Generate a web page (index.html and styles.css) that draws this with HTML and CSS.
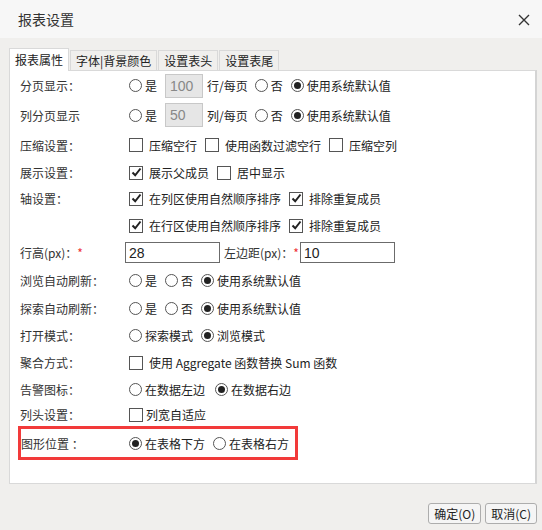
FILE: index.html
```html
<!DOCTYPE html>
<html lang="zh-CN">
<head>
	<meta charset="UTF-8">
	<title>报表设置</title>
	<link rel="stylesheet" href="styles.css">
</head>
<body>
	<div class="dialog">
		<div class="titlebar">
			<span class="title">报表设置</span>
			<span class="close">
				<svg width="12" height="12" viewBox="0 0 12 12"><path d="M1 1 L11 11 M11 1 L1 11" stroke="#333" stroke-width="1.4" fill="none"/></svg>
			</span>
		</div>
		<div class="body">
			<ul class="tabs">
				<li class="act">报表属性</li>
				<li>字体|背景颜色</li>
				<li>设置表头</li>
				<li>设置表尾</li>
			</ul>
			<div class="panel">
				<div class="row r1">
					<span class="label">分页显示：</span>
					<span class="opt"><i class="radio"></i>是</span>
					<span class="box off">100</span>
					<span class="unit">行/每页</span>
					<span class="opt"><i class="radio"></i>否</span>
					<span class="opt"><i class="radio on"></i>使用系统默认值</span>
				</div>
				<div class="row r2">
					<span class="label">列分页显示</span>
					<span class="opt"><i class="radio"></i>是</span>
					<span class="box off">50</span>
					<span class="unit">列/每页</span>
					<span class="opt"><i class="radio"></i>否</span>
					<span class="opt"><i class="radio on"></i>使用系统默认值</span>
				</div>
				<div class="row r3">
					<span class="label">压缩设置：</span>
					<span class="cb"><i class="check"></i>压缩空行</span>
					<span class="cb"><i class="check"></i>使用函数过滤空行</span>
					<span class="cb"><i class="check"></i>压缩空列</span>
				</div>
				<div class="row r4">
					<span class="label">展示设置：</span>
					<span class="cb"><i class="check on"><svg width="11" height="11" viewBox="0 0 11 11"><path d="M1.5 5.5 L4.2 8.3 L9.5 1.5" stroke="#222" stroke-width="2" fill="none"/></svg></i>展示父成员</span>
					<span class="cb"><i class="check"></i>居中显示</span>
				</div>
				<div class="row">
					<span class="label">轴设置：</span>
					<span class="cb"><i class="check on"><svg width="11" height="11" viewBox="0 0 11 11"><path d="M1.5 5.5 L4.2 8.3 L9.5 1.5" stroke="#222" stroke-width="2" fill="none"/></svg></i>在列区使用自然顺序排序</span>
					<span class="cb"><i class="check on"><svg width="11" height="11" viewBox="0 0 11 11"><path d="M1.5 5.5 L4.2 8.3 L9.5 1.5" stroke="#222" stroke-width="2" fill="none"/></svg></i>排除重复成员</span>
				</div>
				<div class="row">
					<span class="label"></span>
					<span class="cb"><i class="check on"><svg width="11" height="11" viewBox="0 0 11 11"><path d="M1.5 5.5 L4.2 8.3 L9.5 1.5" stroke="#222" stroke-width="2" fill="none"/></svg></i>在行区使用自然顺序排序</span>
					<span class="cb"><i class="check on"><svg width="11" height="11" viewBox="0 0 11 11"><path d="M1.5 5.5 L4.2 8.3 L9.5 1.5" stroke="#222" stroke-width="2" fill="none"/></svg></i>排除重复成员</span>
				</div>
				<div class="row">
					<span class="label short">行高(px)：<em>*</em></span>
					<span class="box edit">28</span>
					<span class="label inline">左边距(px)：<em>*</em></span>
					<span class="box edit">10</span>
				</div>
				<div class="row r8">
					<span class="label">浏览自动刷新：</span>
					<span class="opt"><i class="radio"></i>是</span>
					<span class="opt"><i class="radio"></i>否</span>
					<span class="opt"><i class="radio on"></i>使用系统默认值</span>
				</div>
				<div class="row">
					<span class="label">探索自动刷新：</span>
					<span class="opt"><i class="radio"></i>是</span>
					<span class="opt"><i class="radio"></i>否</span>
					<span class="opt"><i class="radio on"></i>使用系统默认值</span>
				</div>
				<div class="row">
					<span class="label">打开模式：</span>
					<span class="opt"><i class="radio"></i>探索模式</span>
					<span class="opt"><i class="radio on"></i>浏览模式</span>
				</div>
				<div class="row">
					<span class="label">聚合方式：</span>
					<span class="cb"><i class="check"></i>使用 Aggregate 函数替换 Sum 函数</span>
				</div>
				<div class="row">
					<span class="label">告警图标：</span>
					<span class="opt wide"><i class="radio"></i>在数据左边</span>
					<span class="opt"><i class="radio on"></i>在数据右边</span>
				</div>
				<div class="row r13">
					<span class="label">列头设置：</span>
					<span class="cb tight"><i class="check"></i>列宽自适应</span>
				</div>
				<div class="row r14">
					<span class="label">图形位置 ：</span>
					<span class="opt"><i class="radio on"></i>在表格下方</span>
					<span class="opt"><i class="radio"></i>在表格右方</span>
				</div>
			</div>
			<div class="footer">
				<button class="btn">确定(O)</button>
				<button class="btn">取消(C)</button>
			</div>
		</div>
	</div>
</body>
</html>
```

FILE: styles.css
```css
* {
	box-sizing: border-box;
}
body {
	margin: 0;
	background: #f0efed;
	font-family: "Noto Sans CJK SC", "Liberation Sans", sans-serif;
	font-size: 12px;
	color: #222;
}
ul {
	margin: 0;
	padding: 0;
	list-style: none;
}
.dialog {
	width: 542px;
	height: 530px;
}
.titlebar {
	height: 38px;
	background: #f7f7f7;
	display: flex;
	align-items: center;
	justify-content: space-between;
	padding: 0 12px 0 18px;
}
.title {
	font-size: 14px;
	color: #333;
}
.close {
	width: 12px;
	height: 12px;
	display: flex;
	margin-top: 1px;
}
.body {
	padding: 10px 5px 0 9px;
}
.tabs {
	display: flex;
	align-items: flex-end;
	gap: 1px;
	height: 22px;
}
.tabs li {
	height: 20px;
	padding: 0 5px;
	border: 1px solid #d9d9d9;
	border-bottom: none;
	background: #f0efed;
	display: flex;
	align-items: center;
	color: #222;
}
.tabs .act {
	height: 23px;
	margin-bottom: -1px;
	background: #fff;
	position: relative;
	padding-bottom: 1px;
}
.panel {
	height: 414px;
	background: #fff;
	border: 1px solid #d9d9d9;
	border-right: 2px solid #d4d4d4;
	padding: 0 0 0 10px;
}
.row {
	display: flex;
	align-items: center;
	height: 27px;
	white-space: nowrap;
}
.row > * {
	flex: none;
}
.r1 {
	height: 29px;
}
.r2,
.r3 {
	height: 30px;
}
.r4 {
	height: 25px;
}
.r8 {
	height: 29px;
}
.r13 {
	height: 23px;
}
.r14 {
	height: 34px;
	width: 280px;
	margin-left: -2px;
	border: 3px solid #f23a3a;
}
.label {
	width: 109px;
	color: #333;
}
.r14 .label {
	width: 108px;
}
.label.short {
	width: 105px;
}
.label.inline {
	width: auto;
	margin: 0 1px 0 4px;
}
.label em {
	font-style: normal;
	color: #e33;
}
.opt {
	display: flex;
	align-items: center;
	gap: 3px;
	margin-right: 8px;
}
.opt.wide {
	margin-right: 10px;
}
.r1 .opt:first-of-type,
.r2 .opt:first-of-type {
	margin-right: 4px;
}
.radio {
	width: 13px;
	height: 13px;
	border: 1px solid #555;
	border-radius: 50%;
	background: #fff;
	display: flex;
	align-items: center;
	justify-content: center;
}
.radio.on::after {
	content: '';
	width: 7px;
	height: 7px;
	border-radius: 50%;
	background: #222;
}
.cb {
	display: flex;
	align-items: center;
	gap: 6px;
	margin-right: 8px;
}
.cb.tight {
	gap: 3px;
}
.check {
	width: 14px;
	height: 14px;
	border: 1px solid #555;
	background: #fff;
	display: flex;
	align-items: center;
	justify-content: center;
}
.box {
	height: 24px;
	width: 38px;
	display: flex;
	align-items: center;
	padding-left: 4px;
	font-size: 14px;
	font-family: "Liberation Sans", sans-serif;
}
.box.off {
	background: #e6e6e6;
	border: 1px solid #c8c8c8;
	color: #888;
}
.box.edit {
	width: 95px;
	height: 21px;
	border: 1px solid #6b6b6b;
	color: #222;
	padding-left: 3px;
}
.unit {
	margin: 0 7px 0 4px;
}
.footer {
	display: flex;
	justify-content: flex-end;
	gap: 4px;
	margin-top: 19px;
}
.btn {
	height: 21px;
	padding: 0 5px;
	border: 1px solid #adadad;
	border-radius: 3px;
	background: #f5f5f5;
	font-family: "Noto Sans CJK SC", "Liberation Sans", sans-serif;
	font-size: 12px;
	color: #222;
	display: flex;
	align-items: center;
}
```
